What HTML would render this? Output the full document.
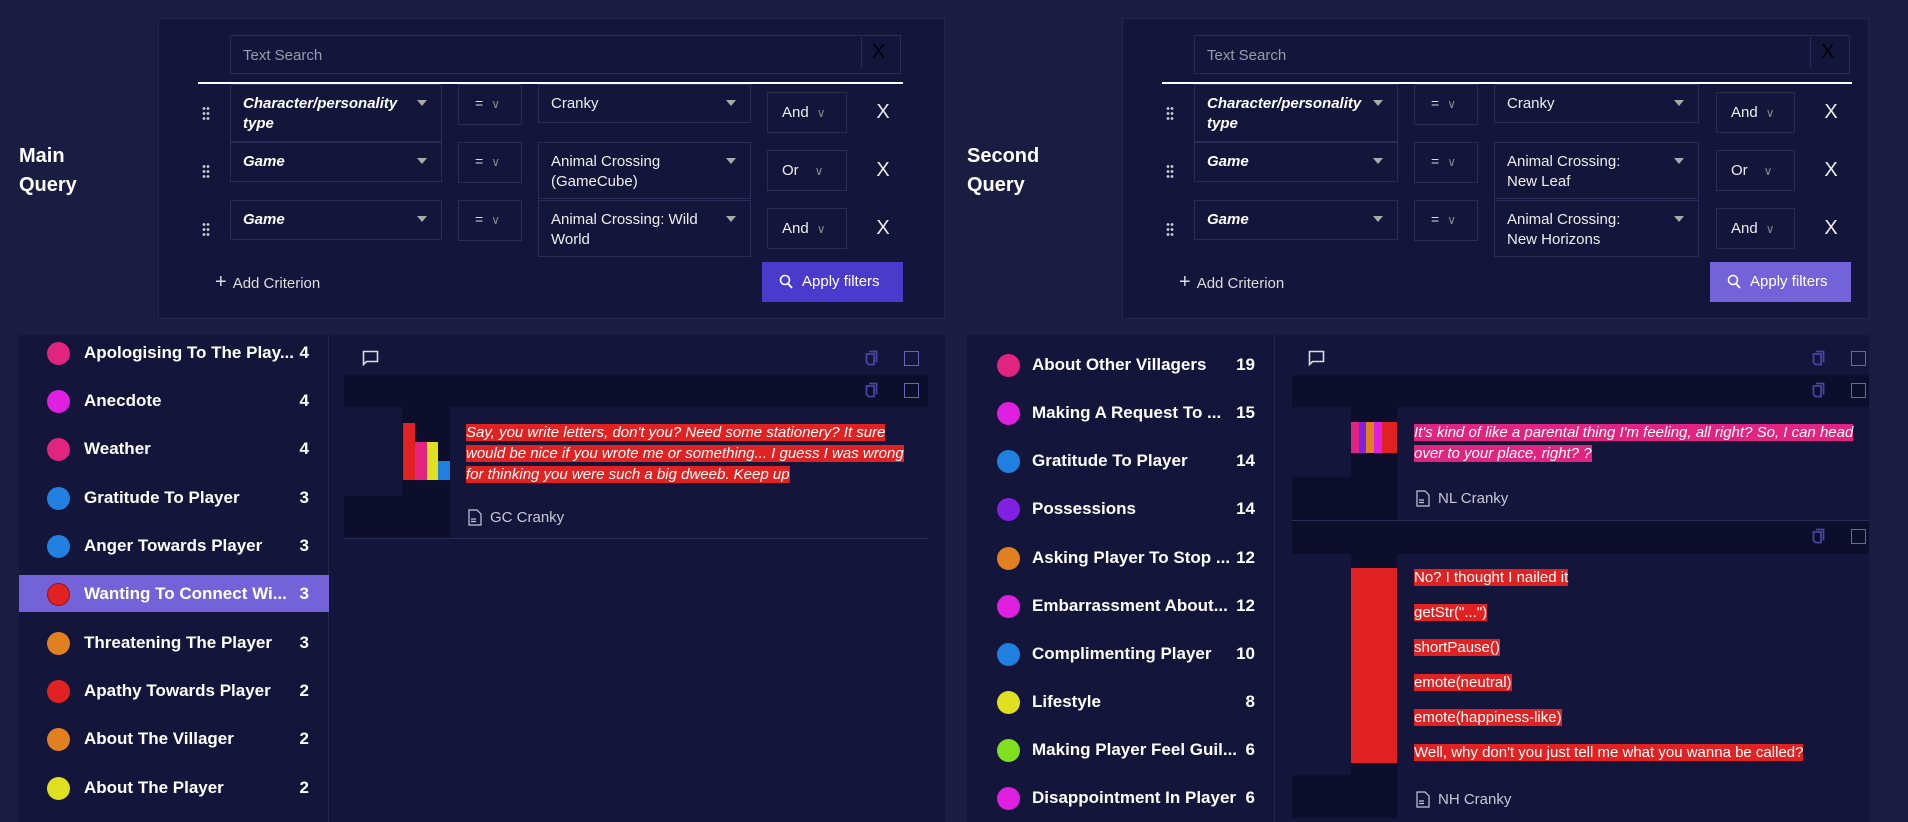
<!DOCTYPE html>
<html><head><meta charset="utf-8"><style>
*{box-sizing:border-box;margin:0;padding:0}
body{width:1908px;height:822px;background:#1b1c42;font-family:"Liberation Sans",sans-serif;color:#fff;position:relative;overflow:hidden}
.a{position:absolute}
.panel{background:#14153a;border:1px solid #23254c}
.box{position:absolute;border:1px solid #2a2c55;background:#14153a}
.fld{font-weight:bold;font-style:italic;font-size:15px;line-height:20px;padding:9px 0 0 12px}
.val{font-size:15px;line-height:20px;padding:9px 0 0 12px;color:#eee}
.tri{position:absolute;right:14px;top:15px;width:0;height:0;border-left:5px solid transparent;border-right:5px solid transparent;border-top:6px solid #aaa}
.op{font-size:14px;padding:10px 0 0 16px;color:#ddd}
.op span,.ao span{color:#888;font-size:12px;margin-left:8px}
.ao{font-size:15px;padding:11px 0 0 14px;color:#eee}
.x{position:absolute;font-size:20px;color:#eee;width:20px;text-align:center}
.drag{position:absolute;width:8px;height:14px;background:radial-gradient(circle,#ccc 1.2px,transparent 1.6px) 0 0/4px 5px}
.btn{position:absolute;font-size:15px;color:#fff;padding:11px 0 0 40px}
.add{position:absolute;font-size:15px;color:#ddd}
.item{position:absolute;height:48px;font-weight:bold;font-size:17px;line-height:48px}
.dot{position:absolute;width:23px;height:23px;border-radius:50%;top:13px}
.item .t{position:absolute;left:65px;white-space:nowrap}
.item .n{position:absolute;font-weight:bold;text-align:right}
.hl{background:#e02222;color:#fff}
.q{font-style:italic;font-size:15px;line-height:21px}
.src{position:absolute;font-size:15px;color:#c8c8d8}
.chk{position:absolute;width:15px;height:15px;border:1.5px solid #6a63b8}
</style></head><body>
<svg width="0" height="0" style="position:absolute"><defs><symbol id="cp" viewBox="0 0 14 16"><path d="M4 1.5h7.5v11" fill="none" stroke="#4c43a0" stroke-width="1.8"/><path d="M1.5 4h7.5v10.5h-5.5l-2-2z" fill="none" stroke="#4c43a0" stroke-width="1.8"/></symbol></defs></svg>

<!-- LEFT QUERY -->
<div class="a" style="left:19px;top:142px;font-size:20px;font-weight:bold;line-height:29px">Main<br>Query</div>
<div class="a panel" style="left:158px;top:18px;width:787px;height:301px"></div>
<div class="box" style="left:230px;top:35px;width:671px;height:39px;color:#9a9ab0;font-size:15px;padding:11px 0 0 12px">Text Search</div>
<div class="a" style="left:861px;top:37px;width:1px;height:30px;background:#2a2c55"></div>
<div class="a" style="left:872px;top:41px;font-size:20px;color:#000">X</div>
<div class="a" style="left:198px;top:82px;width:705px;height:2px;background:#fff"></div>

<div class="drag" style="left:202px;top:106px"></div>
<div class="drag" style="left:202px;top:164px"></div>
<div class="drag" style="left:202px;top:222px"></div>

<div class="box fld" style="left:230px;top:84px;width:212px;height:58px">Character/personality<br>type<i class="tri"></i></div>
<div class="box fld" style="left:230px;top:142px;width:212px;height:40px">Game<i class="tri"></i></div>
<div class="box fld" style="left:230px;top:200px;width:212px;height:40px">Game<i class="tri"></i></div>

<div class="box op" style="left:458px;top:84px;width:64px;height:41px">=<span>∨</span></div>
<div class="box op" style="left:458px;top:142px;width:64px;height:41px">=<span>∨</span></div>
<div class="box op" style="left:458px;top:200px;width:64px;height:41px">=<span>∨</span></div>

<div class="box val" style="left:538px;top:84px;width:213px;height:39px">Cranky<i class="tri"></i></div>
<div class="box val" style="left:538px;top:142px;width:213px;height:57px">Animal Crossing<br>(GameCube)<i class="tri"></i></div>
<div class="box val" style="left:538px;top:200px;width:213px;height:57px">Animal Crossing: Wild<br>World<i class="tri"></i></div>

<div class="box ao" style="left:767px;top:92px;width:80px;height:41px">And<span>∨</span></div>
<div class="box ao" style="left:767px;top:150px;width:80px;height:41px">Or<span style="margin-left:16px">∨</span></div>
<div class="box ao" style="left:767px;top:208px;width:80px;height:41px">And<span>∨</span></div>

<div class="x" style="left:873px;top:101px">X</div>
<div class="x" style="left:873px;top:159px">X</div>
<div class="x" style="left:873px;top:217px">X</div>

<div class="add" style="left:215px;top:271px"><span style="font-size:20px;margin-right:6px">+</span>Add Criterion</div>
<div class="btn" style="left:762px;top:262px;width:141px;height:40px;background:#4b3bcc"><svg class="a" style="left:17px;top:12px" width="14" height="16"><circle cx="6" cy="6" r="4.5" fill="none" stroke="#fff" stroke-width="1.6"/><line x1="9" y1="9.5" x2="13" y2="14" stroke="#fff" stroke-width="1.8"/></svg>Apply filters</div>

<!-- RIGHT QUERY -->
<div class="a" style="left:967px;top:142px;font-size:20px;font-weight:bold;line-height:29px">Second<br>Query</div>
<div class="a panel" style="left:1122px;top:18px;width:747px;height:301px"></div>
<div class="box" style="left:1194px;top:35px;width:656px;height:39px;color:#9a9ab0;font-size:15px;padding:11px 0 0 12px">Text Search</div>
<div class="a" style="left:1810px;top:37px;width:1px;height:30px;background:#2a2c55"></div>
<div class="a" style="left:1821px;top:41px;font-size:20px;color:#000">X</div>
<div class="a" style="left:1162px;top:82px;width:690px;height:2px;background:#fff"></div>

<div class="drag" style="left:1166px;top:106px"></div>
<div class="drag" style="left:1166px;top:164px"></div>
<div class="drag" style="left:1166px;top:222px"></div>

<div class="box fld" style="left:1194px;top:84px;width:204px;height:58px">Character/personality<br>type<i class="tri"></i></div>
<div class="box fld" style="left:1194px;top:142px;width:204px;height:40px">Game<i class="tri"></i></div>
<div class="box fld" style="left:1194px;top:200px;width:204px;height:40px">Game<i class="tri"></i></div>

<div class="box op" style="left:1414px;top:84px;width:64px;height:41px">=<span>∨</span></div>
<div class="box op" style="left:1414px;top:142px;width:64px;height:41px">=<span>∨</span></div>
<div class="box op" style="left:1414px;top:200px;width:64px;height:41px">=<span>∨</span></div>

<div class="box val" style="left:1494px;top:84px;width:205px;height:39px">Cranky<i class="tri"></i></div>
<div class="box val" style="left:1494px;top:142px;width:205px;height:57px">Animal Crossing:<br>New Leaf<i class="tri"></i></div>
<div class="box val" style="left:1494px;top:200px;width:205px;height:57px">Animal Crossing:<br>New Horizons<i class="tri"></i></div>

<div class="box ao" style="left:1716px;top:92px;width:79px;height:41px">And<span>∨</span></div>
<div class="box ao" style="left:1716px;top:150px;width:79px;height:41px">Or<span style="margin-left:16px">∨</span></div>
<div class="box ao" style="left:1716px;top:208px;width:79px;height:41px">And<span>∨</span></div>

<div class="x" style="left:1821px;top:101px">X</div>
<div class="x" style="left:1821px;top:159px">X</div>
<div class="x" style="left:1821px;top:217px">X</div>

<div class="add" style="left:1179px;top:271px"><span style="font-size:20px;margin-right:6px">+</span>Add Criterion</div>
<div class="btn" style="left:1710px;top:262px;width:141px;height:40px;background:#7462d9"><svg class="a" style="left:17px;top:12px" width="14" height="16"><circle cx="6" cy="6" r="4.5" fill="none" stroke="#fff" stroke-width="1.6"/><line x1="9" y1="9.5" x2="13" y2="14" stroke="#fff" stroke-width="1.8"/></svg>Apply filters</div>

<!-- LEFT BOTTOM -->
<div class="a" style="left:19px;top:335px;width:310px;height:487px;background:#14153a;border-right:1px solid #23254c"></div>
<div class="a" style="left:329px;top:335px;width:616px;height:487px;background:#14153a"></div>
<div class="a" style="left:19px;top:575px;width:310px;height:37px;background:#7462d9"></div>

<div class="item" style="left:19px;top:329px;width:310px"><i class="dot" style="left:28px;background:#e0247f"></i><span class="t">Apologising To The Play...</span><span class="n" style="right:20px">4</span></div>
<div class="item" style="left:19px;top:377px;width:310px"><i class="dot" style="left:28px;background:#e020e0"></i><span class="t">Anecdote</span><span class="n" style="right:20px">4</span></div>
<div class="item" style="left:19px;top:425px;width:310px"><i class="dot" style="left:28px;background:#e0247f"></i><span class="t">Weather</span><span class="n" style="right:20px">4</span></div>
<div class="item" style="left:19px;top:474px;width:310px"><i class="dot" style="left:28px;background:#2080e0"></i><span class="t">Gratitude To Player</span><span class="n" style="right:20px">3</span></div>
<div class="item" style="left:19px;top:522px;width:310px"><i class="dot" style="left:28px;background:#2080e0"></i><span class="t">Anger Towards Player</span><span class="n" style="right:20px">3</span></div>
<div class="item" style="left:19px;top:570px;width:310px"><i class="dot" style="left:28px;background:#e02222;border:1px solid #a01010"></i><span class="t">Wanting To Connect Wi...</span><span class="n" style="right:20px">3</span></div>
<div class="item" style="left:19px;top:619px;width:310px"><i class="dot" style="left:28px;background:#e08020"></i><span class="t">Threatening The Player</span><span class="n" style="right:20px">3</span></div>
<div class="item" style="left:19px;top:667px;width:310px"><i class="dot" style="left:28px;background:#e02222"></i><span class="t">Apathy Towards Player</span><span class="n" style="right:20px">2</span></div>
<div class="item" style="left:19px;top:715px;width:310px"><i class="dot" style="left:28px;background:#e08020"></i><span class="t">About The Villager</span><span class="n" style="right:20px">2</span></div>
<div class="item" style="left:19px;top:764px;width:310px"><i class="dot" style="left:28px;background:#e0e020"></i><span class="t">About The Player</span><span class="n" style="right:20px">2</span></div>

<svg class="a" style="left:362px;top:350px" width="18" height="18"><path d="M1.5 1.5h14v10h-11l-3 3z" fill="none" stroke="#ddd" stroke-width="1.6"/></svg>
<svg class="a" style="left:865px;top:350px" width="14" height="16"><use href="#cp"/></svg><div class="chk" style="left:904px;top:351px"></div>
<div class="a" style="left:344px;top:375px;width:584px;height:32px;background:#0d0e2b"></div>
<svg class="a" style="left:865px;top:382px" width="14" height="16"><use href="#cp"/></svg><div class="chk" style="left:904px;top:383px"></div>
<div class="a" style="left:344px;top:407px;width:106px;height:131px;background:#0d0e2b"></div>
<div class="a" style="left:344px;top:407px;width:58px;height:89px;background:#14153a"></div>
<div class="a" style="left:403px;top:423px;width:12px;height:57px;background:#e02222"></div>
<div class="a" style="left:415px;top:442px;width:12px;height:38px;background:#e0247f"></div>
<div class="a" style="left:427px;top:442px;width:11px;height:38px;background:#e0e020"></div>
<div class="a" style="left:438px;top:461px;width:12px;height:19px;background:#2080e0"></div>
<div class="a q" style="left:466px;top:422px;width:440px"><span class="hl">Say, you write letters, don't you? Need some stationery? It sure would be nice if you wrote me or something... I guess I was wrong for thinking you were such a big dweeb. Keep up</span></div>
<svg class="a" style="left:468px;top:509px" width="14" height="17"><path d="M1 1h8l4 4v11H1z M3 10h5 M3 12.5h5" fill="none" stroke="#c8c8d8" stroke-width="1.2"/></svg>
<div class="src" style="left:490px;top:509px">GC Cranky</div>
<div class="a" style="left:344px;top:538px;width:584px;height:1px;background:#2a2c55"></div>

<!-- RIGHT BOTTOM -->
<div class="a" style="left:967px;top:335px;width:308px;height:487px;background:#14153a;border-right:1px solid #23254c"></div>
<div class="a" style="left:1275px;top:335px;width:594px;height:487px;background:#14153a"></div>

<div class="item" style="left:967px;top:341px;width:308px"><i class="dot" style="left:30px;background:#e0247f"></i><span class="t" style="left:65px">About Other Villagers</span><span class="n" style="right:20px">19</span></div>
<div class="item" style="left:967px;top:389px;width:308px"><i class="dot" style="left:30px;background:#e020e0"></i><span class="t">Making A Request To ...</span><span class="n" style="right:20px">15</span></div>
<div class="item" style="left:967px;top:437px;width:308px"><i class="dot" style="left:30px;background:#2080e0"></i><span class="t">Gratitude To Player</span><span class="n" style="right:20px">14</span></div>
<div class="item" style="left:967px;top:485px;width:308px"><i class="dot" style="left:30px;background:#8020e0"></i><span class="t">Possessions</span><span class="n" style="right:20px">14</span></div>
<div class="item" style="left:967px;top:534px;width:308px"><i class="dot" style="left:30px;background:#e08020"></i><span class="t">Asking Player To Stop ...</span><span class="n" style="right:20px">12</span></div>
<div class="item" style="left:967px;top:582px;width:308px"><i class="dot" style="left:30px;background:#e020e0"></i><span class="t">Embarrassment About...</span><span class="n" style="right:20px">12</span></div>
<div class="item" style="left:967px;top:630px;width:308px"><i class="dot" style="left:30px;background:#2080e0"></i><span class="t">Complimenting Player</span><span class="n" style="right:20px">10</span></div>
<div class="item" style="left:967px;top:678px;width:308px"><i class="dot" style="left:30px;background:#e0e020"></i><span class="t">Lifestyle</span><span class="n" style="right:20px">8</span></div>
<div class="item" style="left:967px;top:726px;width:308px"><i class="dot" style="left:30px;background:#80e020"></i><span class="t">Making Player Feel Guil...</span><span class="n" style="right:20px">6</span></div>
<div class="item" style="left:967px;top:774px;width:308px"><i class="dot" style="left:30px;background:#e020e0"></i><span class="t">Disappointment In Player</span><span class="n" style="right:20px">6</span></div>

<svg class="a" style="left:1308px;top:350px" width="18" height="18"><path d="M1.5 1.5h14v10h-11l-3 3z" fill="none" stroke="#ddd" stroke-width="1.6"/></svg>
<svg class="a" style="left:1812px;top:350px" width="14" height="16"><use href="#cp"/></svg><div class="chk" style="left:1851px;top:351px"></div>
<div class="a" style="left:1292px;top:375px;width:577px;height:32px;background:#0d0e2b"></div>
<svg class="a" style="left:1812px;top:382px" width="14" height="16"><use href="#cp"/></svg><div class="chk" style="left:1851px;top:383px"></div>
<div class="a" style="left:1292px;top:407px;width:105px;height:113px;background:#0d0e2b"></div>
<div class="a" style="left:1292px;top:407px;width:59px;height:70px;background:#14153a"></div>
<div class="a" style="left:1351px;top:422px;width:8px;height:31px;background:#e0247f"></div>
<div class="a" style="left:1359px;top:422px;width:7px;height:31px;background:#8020e0"></div>
<div class="a" style="left:1366px;top:422px;width:8px;height:31px;background:#e08020"></div>
<div class="a" style="left:1374px;top:422px;width:8px;height:31px;background:#e020e0"></div>
<div class="a" style="left:1382px;top:422px;width:15px;height:31px;background:#e02222"></div>
<div class="a q" style="left:1414px;top:422px;width:440px"><span class="hl" style="background:#e0247f">It's kind of like a parental thing I'm feeling, all right? So, I can head over to your place, right? ?</span></div>
<svg class="a" style="left:1416px;top:490px" width="14" height="17"><path d="M1 1h8l4 4v11H1z M3 10h5 M3 12.5h5" fill="none" stroke="#c8c8d8" stroke-width="1.2"/></svg>
<div class="src" style="left:1438px;top:490px">NL Cranky</div>
<div class="a" style="left:1292px;top:520px;width:577px;height:1px;background:#2a2c55"></div>
<div class="a" style="left:1292px;top:521px;width:577px;height:33px;background:#0d0e2b"></div>
<svg class="a" style="left:1812px;top:528px" width="14" height="16"><use href="#cp"/></svg><div class="chk" style="left:1851px;top:529px"></div>
<div class="a" style="left:1292px;top:554px;width:105px;height:264px;background:#0d0e2b"></div>
<div class="a" style="left:1292px;top:554px;width:59px;height:221px;background:#14153a"></div>
<div class="a" style="left:1351px;top:568px;width:46px;height:195px;background:#e02222"></div>
<div class="a" style="left:1414px;top:568px;font-size:15px;line-height:19px">
<div style="height:35px"><span class="hl">No? I thought I nailed it</span></div>
<div style="height:35px"><span class="hl">getStr("...")</span></div>
<div style="height:35px"><span class="hl">shortPause()</span></div>
<div style="height:35px"><span class="hl">emote(neutral)</span></div>
<div style="height:35px"><span class="hl">emote(happiness-like)</span></div>
<div style="height:35px"><span class="hl">Well, why don't you just tell me what you wanna be called?</span></div>
</div>
<svg class="a" style="left:1416px;top:791px" width="14" height="17"><path d="M1 1h8l4 4v11H1z M3 10h5 M3 12.5h5" fill="none" stroke="#c8c8d8" stroke-width="1.2"/></svg>
<div class="src" style="left:1438px;top:791px">NH Cranky</div>
</body></html>
